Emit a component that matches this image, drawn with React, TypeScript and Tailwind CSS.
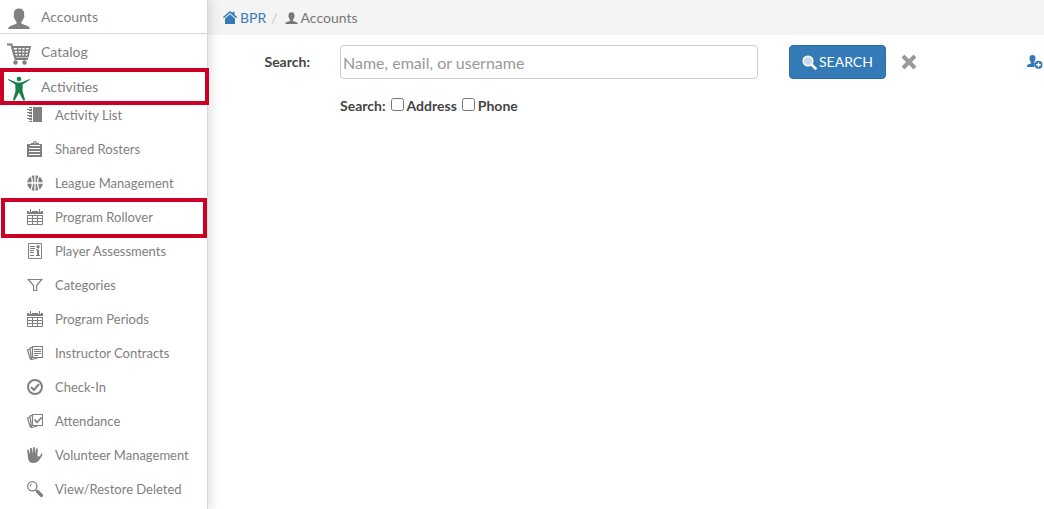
import { useState } from "react";
import type { ReactNode } from "react";

type MenuItem = {
  label: string;
  icon: ReactNode;
  highlighted?: boolean;
};

function PersonIcon({ className }: { className: string }) {
  return (
    <svg viewBox="0 0 22 21" fill="currentColor" className={className} aria-hidden="true">
      <path d="M11 .5c3.400 0 5.200 2 5.200 5 0 .7-.1 1.200-.2 1.700.6.3.6 1.800-.3 2.600-.5 2-1.400 3.400-2.300 4.200v1.300c.7 1 2.300 1.300 4.300 1.900 2.600.8 4.100 1.800 4.100 3.800H.2c0-2 1.500-3 4.100-3.800 2-.6 3.600-.9 4.300-1.900V14c-.9-.8-1.800-2.200-2.300-4.200-.9-.8-.9-2.300-.3-2.600-.1-.5-.2-1-.2-1.700 0-3 1.800-5 5.200-5z" />
    </svg>
  );
}

function CartIcon() {
  return (
    <svg viewBox="0 0 24 22" fill="none" stroke="currentColor" className="h-[22px] w-6" aria-hidden="true">
      <path d="M0 1.500h4.500l4 14.500H21" strokeWidth="2" />
      <path d="M5 4h18L20.800 13.500H7.800z" strokeWidth="1.800" />
      <path d="M6 7.200h16M7 10.300h14.500M10.500 4l.8 9.500M14.500 4v9.500M18.500 4l-.8 9.500" strokeWidth="1.500" />
      <circle cx="8.500" cy="19.500" r="2.200" fill="currentColor" stroke="none" />
      <circle cx="17.500" cy="19.500" r="2.200" fill="currentColor" stroke="none" />
    </svg>
  );
}

function ActivityIcon() {
  return (
    <svg viewBox="0 0 22 25" fill="currentColor" className="h-[25px] w-[22px] text-[#178048]" aria-hidden="true">
      <circle cx="11" cy="3" r="2.300" />
      <path d="M0 3.800l.4-.8 7.600 3.200c1.800.5 4.200.5 6 0L21.600 3l.4.800-7.300 4.700-.2 6.500 2.700 9.200-1.900.4L11 16.500 6.700 24.600l-1.900-.4L7.500 15l-.2-6.500z" />
    </svg>
  );
}

function CalendarIcon() {
  return (
    <svg viewBox="0 0 16 16" className="size-4" fill="none" stroke="currentColor" aria-hidden="true">
      <path d="M0 2h16v3H0z" fill="currentColor" stroke="none" />
      <path d="M2.500 2v1M4.500 2v1M11.500 2v1M13.500 2v1" stroke="#fff" />
      <path d="M3.500 0v3M12.500 0v3M.5 6v9.500h15V6M0 6.500h16M0 9.500h16M0 12.500h16M5.500 6v9.500M10.500 6v9.500" />
    </svg>
  );
}

function StackedPages({ children }: { children: ReactNode }) {
  return (
    <svg viewBox="0 0 16 16" className="size-4" fill="none" stroke="currentColor" aria-hidden="true">
      <path d="M5.500 1.500h10v11h-10zM5 2.500L3 3l1.500 11.500 6-1.500M3 4L.5 5l3 9.500" strokeWidth="1.200" />
      {children}
    </svg>
  );
}

const subItems: MenuItem[] = [
  {
    label: "Activity List",
    icon: (
      <svg viewBox="0 0 16 16" className="size-4" fill="currentColor" aria-hidden="true">
        <path d="M2 0h3v15H2zM6 0h9v15H6z" />
        <path d="M0 2.500h4M0 5.500h4M0 8.500h4M0 11.500h4" stroke="currentColor" />
        <path d="M2 1.500h2.500M2 4.500h2.500M2 7.500h2.500M2 10.500h2.500M2 13.500h2.500" stroke="#fff" />
      </svg>
    ),
  },
  {
    label: "Shared Rosters",
    icon: (
      <svg viewBox="0 0 16 16" className="size-4" fill="currentColor" aria-hidden="true">
        <path d="M0 3h4V2h2a2 2 0 014 0h2v1h3v13H0z" />
        <circle cx="8" cy="1.800" r=".8" fill="#fff" />
        <path d="M3 4.500h10M2 7.500h11M2 10.500h11M2 13.500h11" stroke="#fff" />
      </svg>
    ),
  },
  {
    label: "League Management",
    icon: (
      <svg viewBox="0 0 16 16" className="size-4" aria-hidden="true">
        <circle cx="8" cy="8" r="7.800" fill="currentColor" />
        <path d="M8 0v16M0 8h16M3.500 0c2.500 4 2.500 12 0 16M12.500 0c-2.500 4-2.500 12 0 16" fill="none" stroke="#fff" strokeWidth="1.300" />
      </svg>
    ),
  },
  { label: "Program Rollover", icon: <CalendarIcon />, highlighted: true },
  {
    label: "Player Assessments",
    icon: (
      <svg viewBox="0 0 16 16" className="size-4" fill="none" stroke="currentColor" aria-hidden="true">
        <path d="M1.500.5h13v15h-13zM3 3.500h5M3 5.500h5M3 7.500h4M3 9.500h4M3 12.500h4" />
        <circle cx="11" cy="3.700" r="1.700" fill="currentColor" stroke="none" />
        <path d="M11 6.500v6" strokeWidth="2" />
        <path d="M9 7h2M9 12.500h4" />
      </svg>
    ),
  },
  {
    label: "Categories",
    icon: (
      <svg viewBox="0 0 16 16" className="size-4" fill="none" stroke="currentColor" strokeWidth="1.200" aria-hidden="true">
        <path d="M1.200 2.500h13.600L9.600 8.500v5h-3v-5z" />
      </svg>
    ),
  },
  { label: "Program Periods", icon: <CalendarIcon /> },
  {
    label: "Instructor Contracts",
    icon: (
      <StackedPages>
        <path d="M7 4.500h7M7 6.500h7M7 8.500h7M7 10.500h4" />
      </StackedPages>
    ),
  },
  {
    label: "Check-In",
    icon: (
      <svg viewBox="0 0 16 16" className="size-4" fill="none" stroke="currentColor" strokeWidth="2" aria-hidden="true">
        <circle cx="8" cy="8" r="7" />
        <path d="M4 8l3 3 5-6" />
      </svg>
    ),
  },
  {
    label: "Attendance",
    icon: (
      <StackedPages>
        <path d="M7.500 6.500l2.500 3 4.500-5" strokeWidth="1.800" />
      </StackedPages>
    ),
  },
  {
    label: "Volunteer Management",
    icon: (
      <svg viewBox="0 0 16 16" className="size-4" fill="currentColor" aria-hidden="true">
        <path d="M1 11L.2 3.500c-.1-1.200 1.500-1.400 1.700-.2L3 7.500 3 1.600C3 .4 4.800.4 4.900 1.600L5.300 7 6 1c.1-1.300 1.900-1.300 1.900 0L8 7l1-5c.2-1.200 1.900-1 1.800.2L10.400 9l1.600.8c1.200-1 1.800-2 2.300-3 .5-.9 1.400-.3 1.200.5-.6 2.600-2.100 4.300-3.700 6.200C10.600 15 9 16 6.500 16 3 16 1.300 14 1 11z" />
      </svg>
    ),
  },
  {
    label: "View/Restore Deleted",
    icon: (
      <svg viewBox="0 0 16 16" className="size-4" fill="none" stroke="currentColor" aria-hidden="true">
        <circle cx="5.300" cy="5.300" r="4.600" strokeWidth="1.300" />
        <path d="M3 5.500a2.500 2.500 0 012.300-2.500" />
        <path d="M8.700 8.700l2 2" strokeWidth="1.500" />
        <path d="M10.500 10.500l4 4" strokeWidth="3.200" strokeLinecap="round" />
      </svg>
    ),
  },
];

function Sidebar() {
  return (
    <nav className="relative z-10 w-52 shrink-0 border-r border-[#d8d8d8] bg-white text-[#808080] shadow-[3px_0_10px_rgba(0,0,0,0.12)]">
      <ul className="text-sm">
        <li className="border-b border-[#d5d5d5]">
          <a href="#accounts" className="flex h-[33px] items-center pt-1 pl-2">
            <span className="flex w-[33px]">
              <PersonIcon className="h-[21px] w-[22px]" />
            </span>
            <span className="pb-1">Accounts</span>
          </a>
        </li>
        <li>
          <a href="#catalog" className="flex h-9 items-center pl-[7px]">
            <span className="flex w-[34px] pt-1">
              <CartIcon />
            </span>
            Catalog
          </a>
        </li>
        <li className="relative">
          <a href="#activities" className="flex h-[34px] items-center pl-2">
            <span className="flex w-[33px] pt-0.5">
              <ActivityIcon />
            </span>
            Activities
          </a>
          <span className="pointer-events-none absolute -top-0.5 -right-0.5 left-0 z-10 h-[37px] border-4 border-[#cc0024]" />
          <ul className="-mt-1.5 text-[13px]">
            {subItems.map((item) => (
              <li key={item.label} className="relative">
                <a href="#activities" className="flex h-[34px] items-center gap-3 pl-[27px]">
                  {item.icon}
                  {item.label}
                </a>
                {item.highlighted && (
                  <span className="pointer-events-none absolute -top-0.5 right-0 left-px z-10 h-10 border-4 border-[#cc0024]" />
                )}
              </li>
            ))}
          </ul>
        </li>
      </ul>
    </nav>
  );
}

function Breadcrumb() {
  return (
    <nav aria-label="Breadcrumb" className="bg-[#f4f4f4] pl-[15px]">
      <ol className="flex h-[35px] items-center text-sm text-[#777]">
        <li>
          <a href="#bpr" className="flex items-center gap-[3px] text-[#337ab7]">
            <svg viewBox="0 0 14 13" fill="currentColor" className="h-[13px] w-3.5" aria-hidden="true">
              <path d="M7 0l2.500 2V.8h2v2.800L14 6l-.7 1.200L7 2 .7 7.200 0 6z" />
              <path d="M7 3.200l5 4.200V13H2V7.400z" />
            </svg>
            BPR
          </a>
        </li>
        <li className="px-[5px] text-[#ccc]" aria-hidden="true">/</li>
        <li className="flex items-center gap-[3px] pl-0.5">
          <PersonIcon className="h-3 w-[13px]" />
          Accounts
        </li>
      </ol>
    </nav>
  );
}

function SearchForm() {
  const [query, setQuery] = useState("");

  return (
    <form className="pt-2.5 text-sm text-[#444]" onSubmit={(event) => event.preventDefault()}>
      <div className="flex items-center">
        <label htmlFor="search" className="mr-[30px] w-[102px] text-right font-bold">
          Search:
        </label>
        <input
          id="search"
          type="text"
          value={query}
          onChange={(event) => setQuery(event.target.value)}
          placeholder="Name, email, or username"
          className="h-[34px] w-1/2 rounded border border-[#ccc] px-0.5 text-base placeholder:text-[#999]"
        />
        <button
          type="submit"
          className="ml-[31px] flex h-[34px] items-center gap-0.5 rounded border border-[#2e6da4] bg-[#337ab7] px-3 text-sm text-white"
        >
          <svg viewBox="0 0 15 15" className="size-[15px]" fill="none" stroke="currentColor" aria-hidden="true">
            <circle cx="6" cy="6" r="4.800" fill="#c9d9eb" strokeWidth="1.600" />
            <path d="M10 10l3.500 3.500" strokeWidth="2.600" strokeLinecap="round" />
          </svg>
          SEARCH
        </button>
        <button type="button" aria-label="Clear" onClick={() => setQuery("")} className="ml-[15px] text-[#999]">
          <svg viewBox="0 0 16 16" className="size-4" stroke="currentColor" strokeWidth="4" aria-hidden="true">
            <path d="M2 2l12 12M14 2L2 14" />
          </svg>
        </button>
        <a href="#new-account" aria-label="Add account" className="mr-px ml-auto text-[#337ab7]">
          <svg viewBox="0 0 16 14" className="h-3.5 w-4" fill="currentColor" aria-hidden="true">
            <path d="M5.500 0c2 0 3 1.200 3 3 0 2-.6 3.200-1.400 4v1l1.200.6A4 4 0 007.500 12H0c0-1.800.5-2.400 2-2.900 1.200-.4 1.800-.6 1.900-1.200V7C3 6.200 2.500 5 2.500 3c0-1.800 1-3 3-3z" />
            <circle cx="11.500" cy="9.800" r="4" />
            <path d="M11.500 7.500v4.600M9.200 9.800h4.600" stroke="#fff" strokeWidth="1.400" />
          </svg>
        </a>
      </div>
      <div className="flex items-center pt-[17px] pl-[132px] font-bold">
        <span className="mr-[5px]">Search:</span>
        <input id="address" type="checkbox" className="mr-[3px] mb-1 size-[13px]" />
        <label htmlFor="address" className="mr-[5px]">Address</label>
        <input id="phone" type="checkbox" className="mr-[3px] mb-1 size-[13px]" />
        <label htmlFor="phone">Phone</label>
      </div>
    </form>
  );
}

export default function App() {
  return (
    <div className="flex min-h-screen bg-white font-['Lato',sans-serif]">
      <Sidebar />
      <main className="min-w-0 flex-1">
        <Breadcrumb />
        <SearchForm />
      </main>
    </div>
  );
}
